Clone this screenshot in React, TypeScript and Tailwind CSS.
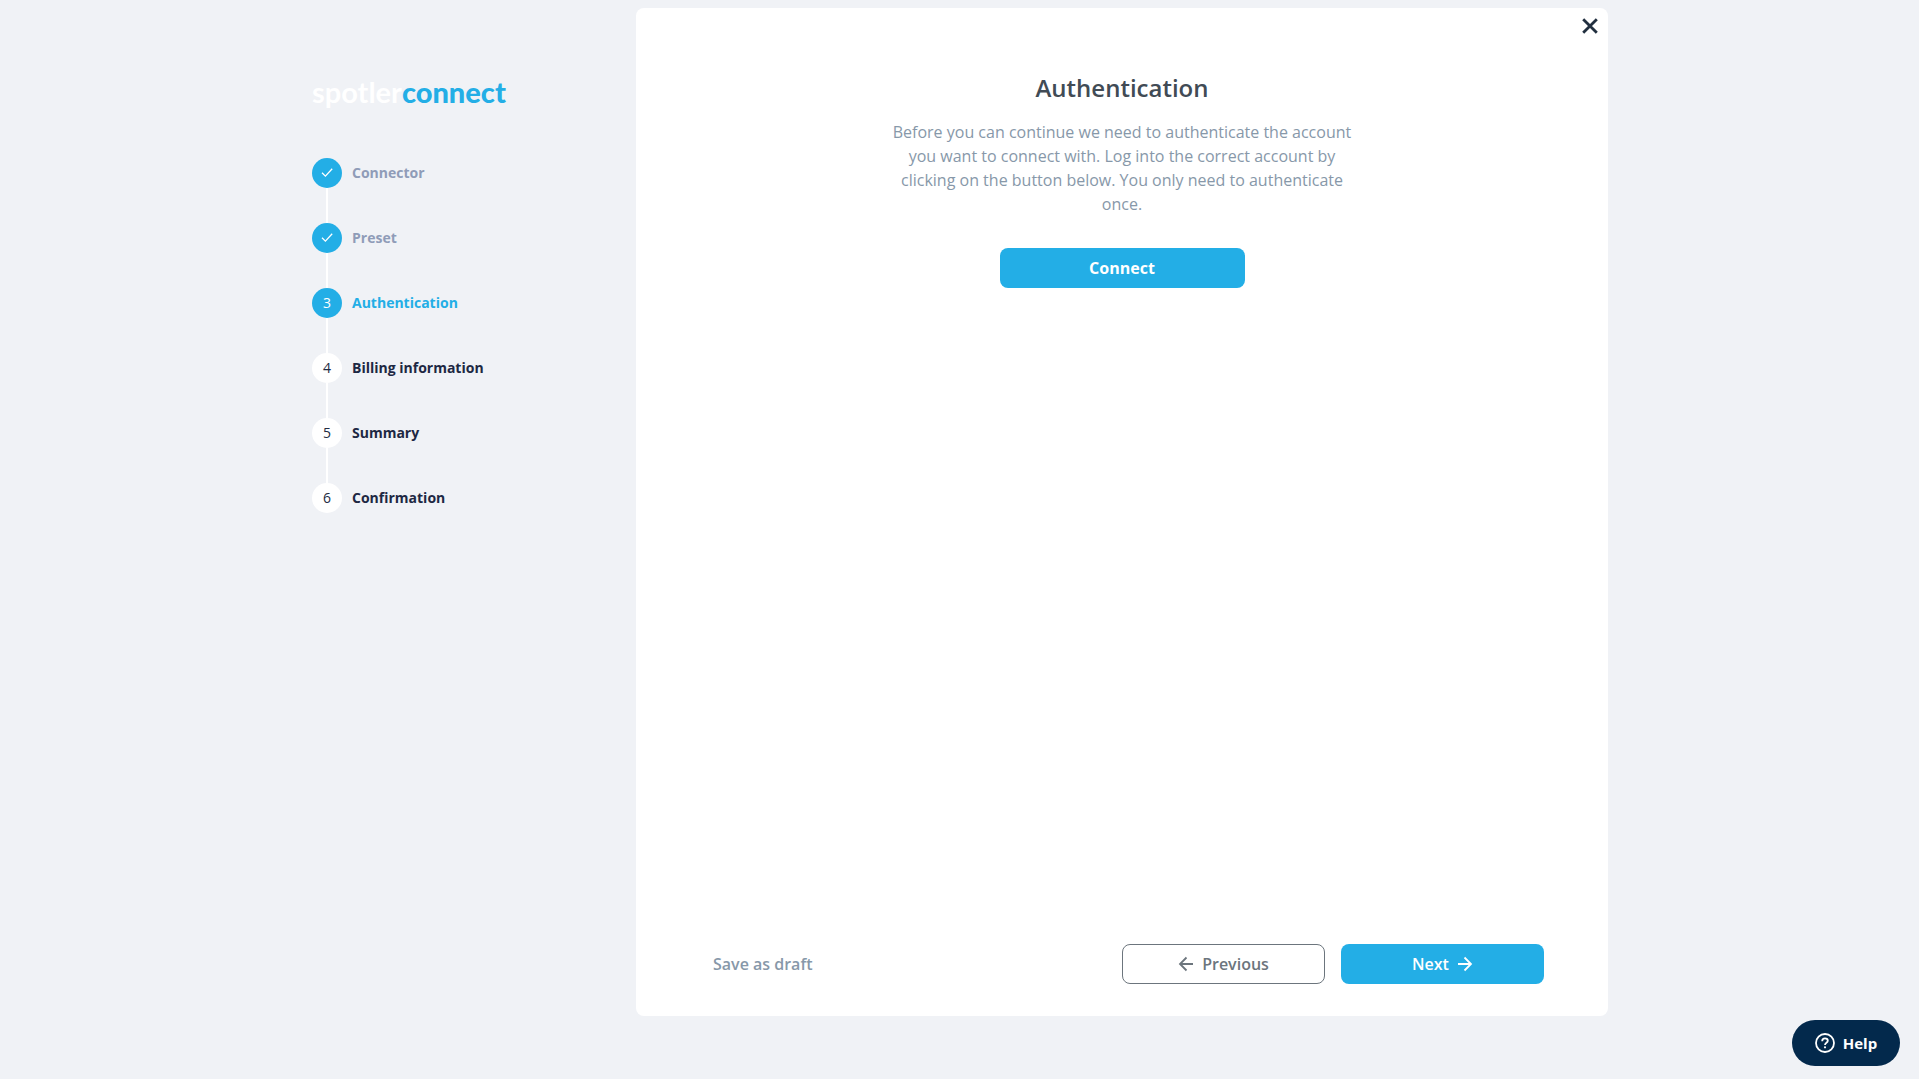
type StepState = "done" | "current" | "todo";

const steps: { label: string; state: StepState }[] = [
  { label: "Connector", state: "done" },
  { label: "Preset", state: "done" },
  { label: "Authentication", state: "current" },
  { label: "Billing information", state: "todo" },
  { label: "Summary", state: "todo" },
  { label: "Confirmation", state: "todo" },
];

const circleStyle: Record<StepState, string> = {
  done: "bg-[#23aee6] text-white",
  current: "bg-[#23aee6] text-white",
  todo: "bg-white text-[#212b42]",
};

const labelStyle: Record<StepState, string> = {
  done: "text-[#8f9cb8]",
  current: "text-[#23aee6]",
  todo: "text-[#1d2843]",
};

function CheckIcon() {
  return (
    <svg className="size-4" viewBox="0 0 16 16" fill="none" stroke="currentColor" strokeWidth="1.3" aria-hidden="true">
      <path d="M3 7.7 L6.4 11.1 L13.2 3.7" />
    </svg>
  );
}

function ArrowIcon({ left = false }: { left?: boolean }) {
  return (
    <svg className="size-4" viewBox="0 0 16 16" fill="none" stroke="currentColor" strokeWidth="1.8" aria-hidden="true">
      <path d={left ? "M15 8 H2.5 M8.5 1.5 L2 8 L8.5 14.5" : "M1 8 H13.5 M7.5 1.5 L14 8 L7.5 14.5"} />
    </svg>
  );
}

function Sidebar() {
  return (
    <aside className="w-1/4 pt-[66px]">
      <a href="#" className="block w-fit font-[Lato,sans-serif] text-[29px] leading-9 font-bold text-white">
        spotler<span className="font-black text-[#23aee6]">connect</span>
      </a>
      <ol className="mt-12 flex flex-col">
        {steps.map((step, i) => (
          <li key={step.label} className="flex gap-2.5" aria-current={step.state === "current" ? "step" : undefined}>
            <div className="flex flex-col items-center">
              <span className={`flex size-[30px] items-center justify-center rounded-full text-sm ${circleStyle[step.state]}`}>
                {step.state === "done" ? <CheckIcon /> : i + 1}
              </span>
              {i < steps.length - 1 && <span className="h-[35px] w-0.5 bg-white" />}
            </div>
            <span className={`text-sm leading-[30px] font-bold ${labelStyle[step.state]}`}>{step.label}</span>
          </li>
        ))}
      </ol>
    </aside>
  );
}

export default function App() {
  return (
    <div className="min-h-screen bg-[#f0f2f6] pt-2 pl-px font-['Open_Sans','Noto_Sans',sans-serif]">
      <div className="mx-auto flex max-w-[1296px]">
        <Sidebar />
        <main className="relative flex min-h-[calc(100vh-71px)] w-3/4 flex-col rounded-lg bg-white px-16 pt-16 pb-8">
          <button type="button" aria-label="Close" className="absolute top-2 right-2 flex size-5 items-center justify-center text-[#212f3f]">
            <svg className="size-4" viewBox="0 0 16 16" fill="none" stroke="currentColor" strokeWidth="2.8" aria-hidden="true">
              <path d="M1.2 1.2 L14.8 14.8 M14.8 1.2 L1.2 14.8" />
            </svg>
          </button>
          <section className="mx-auto flex w-[460px] max-w-full flex-col items-center text-center">
            <h1 className="text-2xl leading-8 font-semibold text-[#414b55]">Authentication</h1>
            <p className="mt-4 text-base leading-6 text-[#8798a9]">
              Before you can continue we need to authenticate the account you want to connect with. Log into the correct
              account by clicking on the button below. You only need to authenticate once.
            </p>
            <button type="button" className="mt-8 h-10 w-[245px] rounded-lg bg-[#23aee6] text-base font-bold text-white">
              Connect
            </button>
          </section>
          <footer className="mt-auto flex items-center">
            <div className="flex w-1/2">
              <button type="button" className="h-10 px-[13px] text-base font-semibold text-[#8798a9]">
                Save as draft
              </button>
            </div>
            <div className="grid w-1/2 grid-cols-2 gap-4">
              <button type="button" className="flex h-10 items-center justify-center gap-2 rounded-lg border border-[#6c757d] text-base font-semibold text-[#6c757d]">
                <ArrowIcon left />
                Previous
              </button>
              <button type="button" className="flex h-10 items-center justify-center gap-2 rounded-lg bg-[#23aee6] text-base font-semibold text-white">
                Next
                <ArrowIcon />
              </button>
            </div>
          </footer>
        </main>
      </div>
      <button type="button" className="fixed right-[19px] bottom-[13px] flex h-[46px] w-[108px] items-center justify-center gap-2 rounded-full bg-[#03294c] text-[15px] font-bold text-white">
        <svg className="size-5" viewBox="0 0 20 20" fill="none" stroke="currentColor" aria-hidden="true">
          <circle cx="10" cy="10" r="9" strokeWidth="1.8" />
          <path d="M7.2 8.2 C7.2 6.4 8.4 5.4 10 5.4 C11.6 5.4 12.8 6.4 12.8 7.8 C12.8 9.8 10 9.8 10 12" strokeWidth="1.8" />
          <circle cx="10" cy="14.3" r="1.1" fill="currentColor" stroke="none" />
        </svg>
        Help
      </button>
    </div>
  );
}
